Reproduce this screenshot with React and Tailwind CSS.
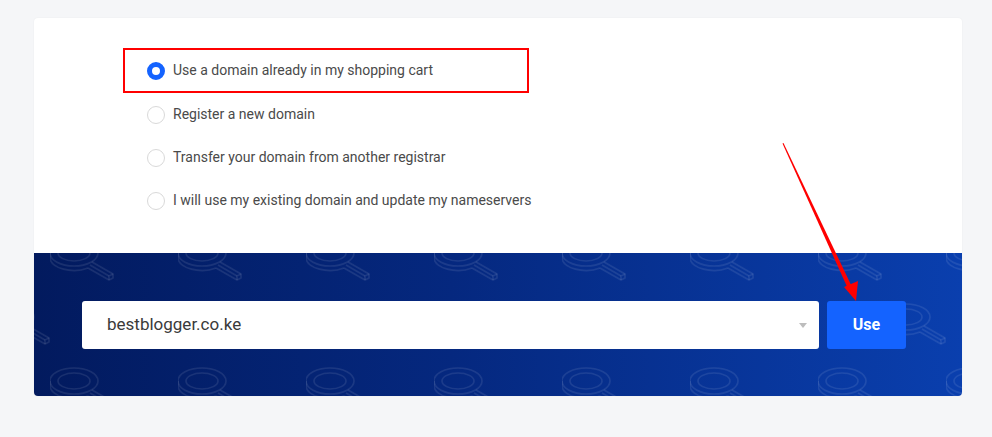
import React, { useState } from "react";

const OPTIONS = [
  "Use a domain already in my shopping cart",
  "Register a new domain",
  "Transfer your domain from another registrar",
  "I will use my existing domain and update my nameservers",
];

function Magnifier({ x, y }) {
  return (
    <g transform={`translate(${x} ${y})`} fill="none" stroke="rgba(255,255,255,0.09)" strokeWidth="1.6" strokeLinejoin="round">
      <ellipse cx="24" cy="13" rx="24" ry="13" />
      <ellipse cx="24" cy="13" rx="16" ry="8" />
      <path d="M0 13 L0 18 A24 13 0 0 0 38 28" />
      <path d="M42 22 L63 34 L63 38 L59 40 L38 28" />
      <path d="M59 40 L59 36 L63 34" />
      <path d="M59 36 L40 25" />
    </g>
  );
}

function Radio({ checked }) {
  if (checked) {
    return <span className="w-[18px] h-[18px] rounded-full border-[5px] border-[#1463ff] bg-white shrink-0" />;
  }
  return <span className="w-[18px] h-[18px] rounded-full border border-[#d9d9d9] bg-white shrink-0" />;
}

export default function App() {
  const [selected, setSelected] = useState(0);

  return (
    <div className="relative w-[992px] h-[437px] bg-[#f5f6f8] pt-[18px] pl-[34px]" style={{ fontFamily: "Roboto, 'Liberation Sans', sans-serif" }}>
      <div className="w-[928px] rounded-[4px] bg-white overflow-hidden shadow-[0_0_2px_rgba(0,0,0,0.05)]">
        {/* options */}
        <div className="pt-[30px] pb-[31px] pl-[89px]">
          {OPTIONS.map((label, i) => (
            <button
              key={label}
              onClick={() => setSelected(i)}
              className={
                i === 0
                  ? "flex items-center gap-[8px] w-[406px] h-[45px] pl-[22px] border-2 border-[#ff0000] text-left"
                  : "flex items-center gap-[8px] w-[406px] h-[43px] pl-[24px] text-left whitespace-nowrap"
              }
            >
              <Radio checked={selected === i} />
              <span className="text-[14px] text-[#4a4a4a]">{label}</span>
            </button>
          ))}
        </div>

        {/* banner */}
        <div className="relative h-[143px] bg-[linear-gradient(90deg,#021a5e_0%,#05287f_45%,#0a3fae_100%)]">
          <svg className="absolute inset-0 w-full h-full" aria-hidden="true">
            <defs>
              <pattern id="mag" width="128" height="128" patternUnits="userSpaceOnUse" patternTransform="translate(16 -13)">
                <Magnifier x={0} y={0} />
                <Magnifier x={64} y={64} />
                <Magnifier x={-64} y={64} />
                <Magnifier x={0} y={128} />
                <Magnifier x={64} y={-64} />
              </pattern>
            </defs>
            <rect width="100%" height="100%" fill="url(#mag)" />
          </svg>
          <div className="relative flex gap-[8px] pt-[48px] pl-[48px]">
            <div className="relative flex items-center w-[737px] h-[48px] bg-white rounded-[3px] pl-[25px]">
              <span className="text-[17px] text-[#3a3a3a]">bestblogger.co.ke</span>
              <span className="absolute right-[12px] top-[22px] w-0 h-0 border-l-[4px] border-r-[4px] border-t-[5px] border-l-transparent border-r-transparent border-t-[#bdbdbd]" />
            </div>
            <button className="w-[79px] h-[48px] rounded-[3px] bg-[#1463ff] text-white text-[16px] font-bold">Use</button>
          </div>
        </div>
      </div>

      {/* annotation arrow */}
      <svg className="absolute left-0 top-0 pointer-events-none" width="992" height="437" aria-hidden="true">
        <polygon points="782.5,143.5 783.5,143 852.5,288 848.5,290" fill="#ff0000" />
        <polygon points="856,301 844,287 858,281" fill="#ff0000" />
      </svg>
    </div>
  );
}
